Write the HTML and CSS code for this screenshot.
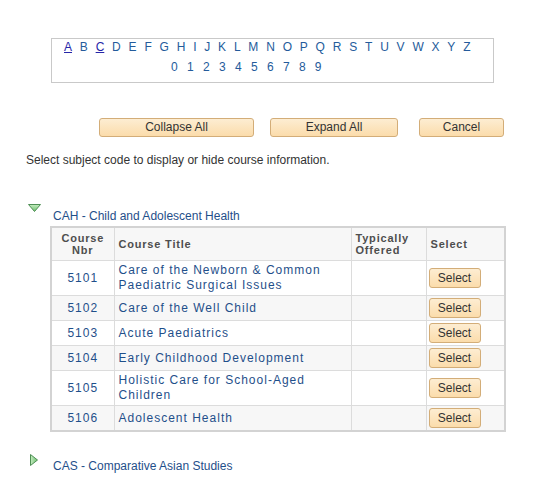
FILE: index.html
```html
<!DOCTYPE html>
<html>
<head>
<meta charset="utf-8">
<link rel="stylesheet" href="styles.css">
</head>
<body>
<div class="alpha">
  <div class="letters">
    <a class="visited">A</a><a>B</a><a class="visited">C</a><a>D</a><a>E</a><a>F</a><a>G</a><a>H</a><a>I</a><a>J</a><a>K</a><a>L</a><a>M</a><a>N</a><a>O</a><a>P</a><a>Q</a><a>R</a><a>S</a><a>T</a><a>U</a><a>V</a><a>W</a><a>X</a><a>Y</a><a>Z</a>
  </div>
  <div class="digits">
    <a>0</a><a>1</a><a>2</a><a>3</a><a>4</a><a>5</a><a>6</a><a>7</a><a>8</a><a>9</a>
  </div>
</div>

<div class="actions">
  <button class="btn btn-collapse">Collapse All</button>
  <button class="btn btn-expand">Expand All</button>
  <button class="btn btn-cancel">Cancel</button>
</div>

<p class="hint">Select subject code to display or hide course information.</p>

<div class="subject open">
  <svg class="tri-down" width="13" height="8" viewBox="0 0 13 8">
    <defs>
      <linearGradient id="gd" x1="0" y1="0" x2="0" y2="1">
        <stop offset="0" stop-color="#c4ecc0"/>
        <stop offset="1" stop-color="#6fbf6f"/>
      </linearGradient>
    </defs>
    <polygon points="0.5,0.5 12.5,0.5 6.5,7.5" fill="url(#gd)" stroke="#4f8f55" stroke-width="1"/>
  </svg>
  <span class="subject-name">CAH - Child and Adolescent Health</span>
</div>

<table class="courses">
  <colgroup>
    <col class="w-nbr">
    <col class="w-title">
    <col class="w-off">
    <col class="w-sel">
  </colgroup>
  <thead>
    <tr>
      <th class="c-nbr">Course<br>Nbr</th>
      <th class="c-title">Course Title</th>
      <th class="c-off">Typically<br>Offered</th>
      <th class="c-sel">Select</th>
    </tr>
  </thead>
  <tbody>
    <tr>
      <td class="c-nbr">5101</td>
      <td class="c-title">Care of the Newborn &amp; Common<br>Paediatric Surgical Issues</td>
      <td class="c-off"></td>
      <td class="c-sel"><button class="btn btn-sel">Select</button></td>
    </tr>
    <tr class="alt">
      <td class="c-nbr">5102</td>
      <td class="c-title">Care of the Well Child</td>
      <td class="c-off"></td>
      <td class="c-sel"><button class="btn btn-sel">Select</button></td>
    </tr>
    <tr>
      <td class="c-nbr">5103</td>
      <td class="c-title">Acute Paediatrics</td>
      <td class="c-off"></td>
      <td class="c-sel"><button class="btn btn-sel">Select</button></td>
    </tr>
    <tr class="alt">
      <td class="c-nbr">5104</td>
      <td class="c-title">Early Childhood Development</td>
      <td class="c-off"></td>
      <td class="c-sel"><button class="btn btn-sel">Select</button></td>
    </tr>
    <tr>
      <td class="c-nbr">5105</td>
      <td class="c-title">Holistic Care for School-Aged<br>Children</td>
      <td class="c-off"></td>
      <td class="c-sel"><button class="btn btn-sel">Select</button></td>
    </tr>
    <tr class="alt">
      <td class="c-nbr">5106</td>
      <td class="c-title">Adolescent Health</td>
      <td class="c-off"></td>
      <td class="c-sel"><button class="btn btn-sel">Select</button></td>
    </tr>
  </tbody>
</table>

<div class="subject closed">
  <svg class="tri-right" width="8" height="12" viewBox="0 0 8 12">
    <defs>
      <linearGradient id="gr" x1="0" y1="0" x2="1" y2="0">
        <stop offset="0" stop-color="#c4ecc0"/>
        <stop offset="1" stop-color="#6fbf6f"/>
      </linearGradient>
    </defs>
    <polygon points="0.5,0.5 7.5,6 0.5,11.5" fill="url(#gr)" stroke="#4f8f55" stroke-width="1"/>
  </svg>
  <span class="subject-name">CAS - Comparative Asian Studies</span>
</div>
</body>
</html>
```

FILE: styles.css
```css
html, body {
  margin: 0;
  padding: 0;
  background: #ffffff;
}

body {
  font-family: "Liberation Sans", Arial, sans-serif;
  font-size: 12px;
  color: #333333;
}

.alpha {
  margin: 38px 0 0 51px;
  width: 443px;
  height: 45px;
  box-sizing: border-box;
  border: 1px solid #c9c9c9;
}

.letters,
.digits {
  display: flex;
  line-height: 17px;
  font-size: 12px;
}

.letters {
  padding-left: 12px;
  gap: 7.8px;
}

.digits {
  margin-top: 3px;
  padding-left: 119px;
  gap: 9.3px;
}

.alpha a {
  color: #245b9b;
  text-decoration: none;
}

.alpha a.visited {
  color: #2626a8;
  text-decoration: underline;
}

.actions {
  display: flex;
  margin: 35px 0 0 99px;
  height: 19px;
}

.btn {
  font-family: "Liberation Sans", Arial, sans-serif;
  font-size: 12px;
  color: #333333;
  background: linear-gradient(to bottom, #fdedd2, #fbdcab);
  border: 1px solid #d3ad78;
  border-radius: 3px;
  padding: 0;
  margin: 0;
  height: 19px;
  line-height: 17px;
  box-sizing: border-box;
}

.btn-collapse { width: 155px; }
.btn-expand { width: 128px; margin-left: 16px; }
.btn-cancel { width: 85px; margin-left: 21px; }

.hint {
  margin: 16px 0 0 26px;
  line-height: 15px;
}

.subject {
  display: flex;
  align-items: flex-start;
  line-height: 15px;
}

.subject.open {
  margin-top: 41px;
}

.subject.closed {
  margin-top: 27px;
}

.tri-down {
  margin: -5px 12px 0 28px;
  flex: none;
}

.tri-right {
  margin: -5px 15px 0 30px;
  flex: none;
}

.subject-name {
  color: #1f4f8a;
}

.courses {
  margin: 2px 0 0 50px;
  width: 454px;
  border-collapse: collapse;
  border: 2px solid #d3d3d3;
  table-layout: fixed;
}

.w-nbr { width: 63px; }
.w-title { width: 237px; }
.w-off { width: 75px; }
.w-sel { width: 79px; }

.courses th,
.courses td {
  border: 1px solid #dcdcdc;
  padding: 2px 4px;
  vertical-align: middle;
}

.courses th {
  background: #f7f7f7;
  color: #4e4e4e;
  font-weight: bold;
  font-size: 11px;
  line-height: 12px;
  letter-spacing: 0.8px;
  text-align: left;
  height: 28px;
}

.courses th.c-nbr {
  text-align: center;
  padding: 2px 1px;
}

.courses td {
  color: #1f4f8a;
  letter-spacing: 1px;
  line-height: 15px;
}

.courses tr.alt td {
  background: #f7f7f7;
}

.courses td.c-nbr {
  text-align: center;
  padding: 2px 1px;
}

.courses td.c-sel {
  padding-left: 2px;
}

.btn-sel {
  width: 52px;
  height: 20px;
  line-height: 18px;
  letter-spacing: 0;
  display: block;
}
```
